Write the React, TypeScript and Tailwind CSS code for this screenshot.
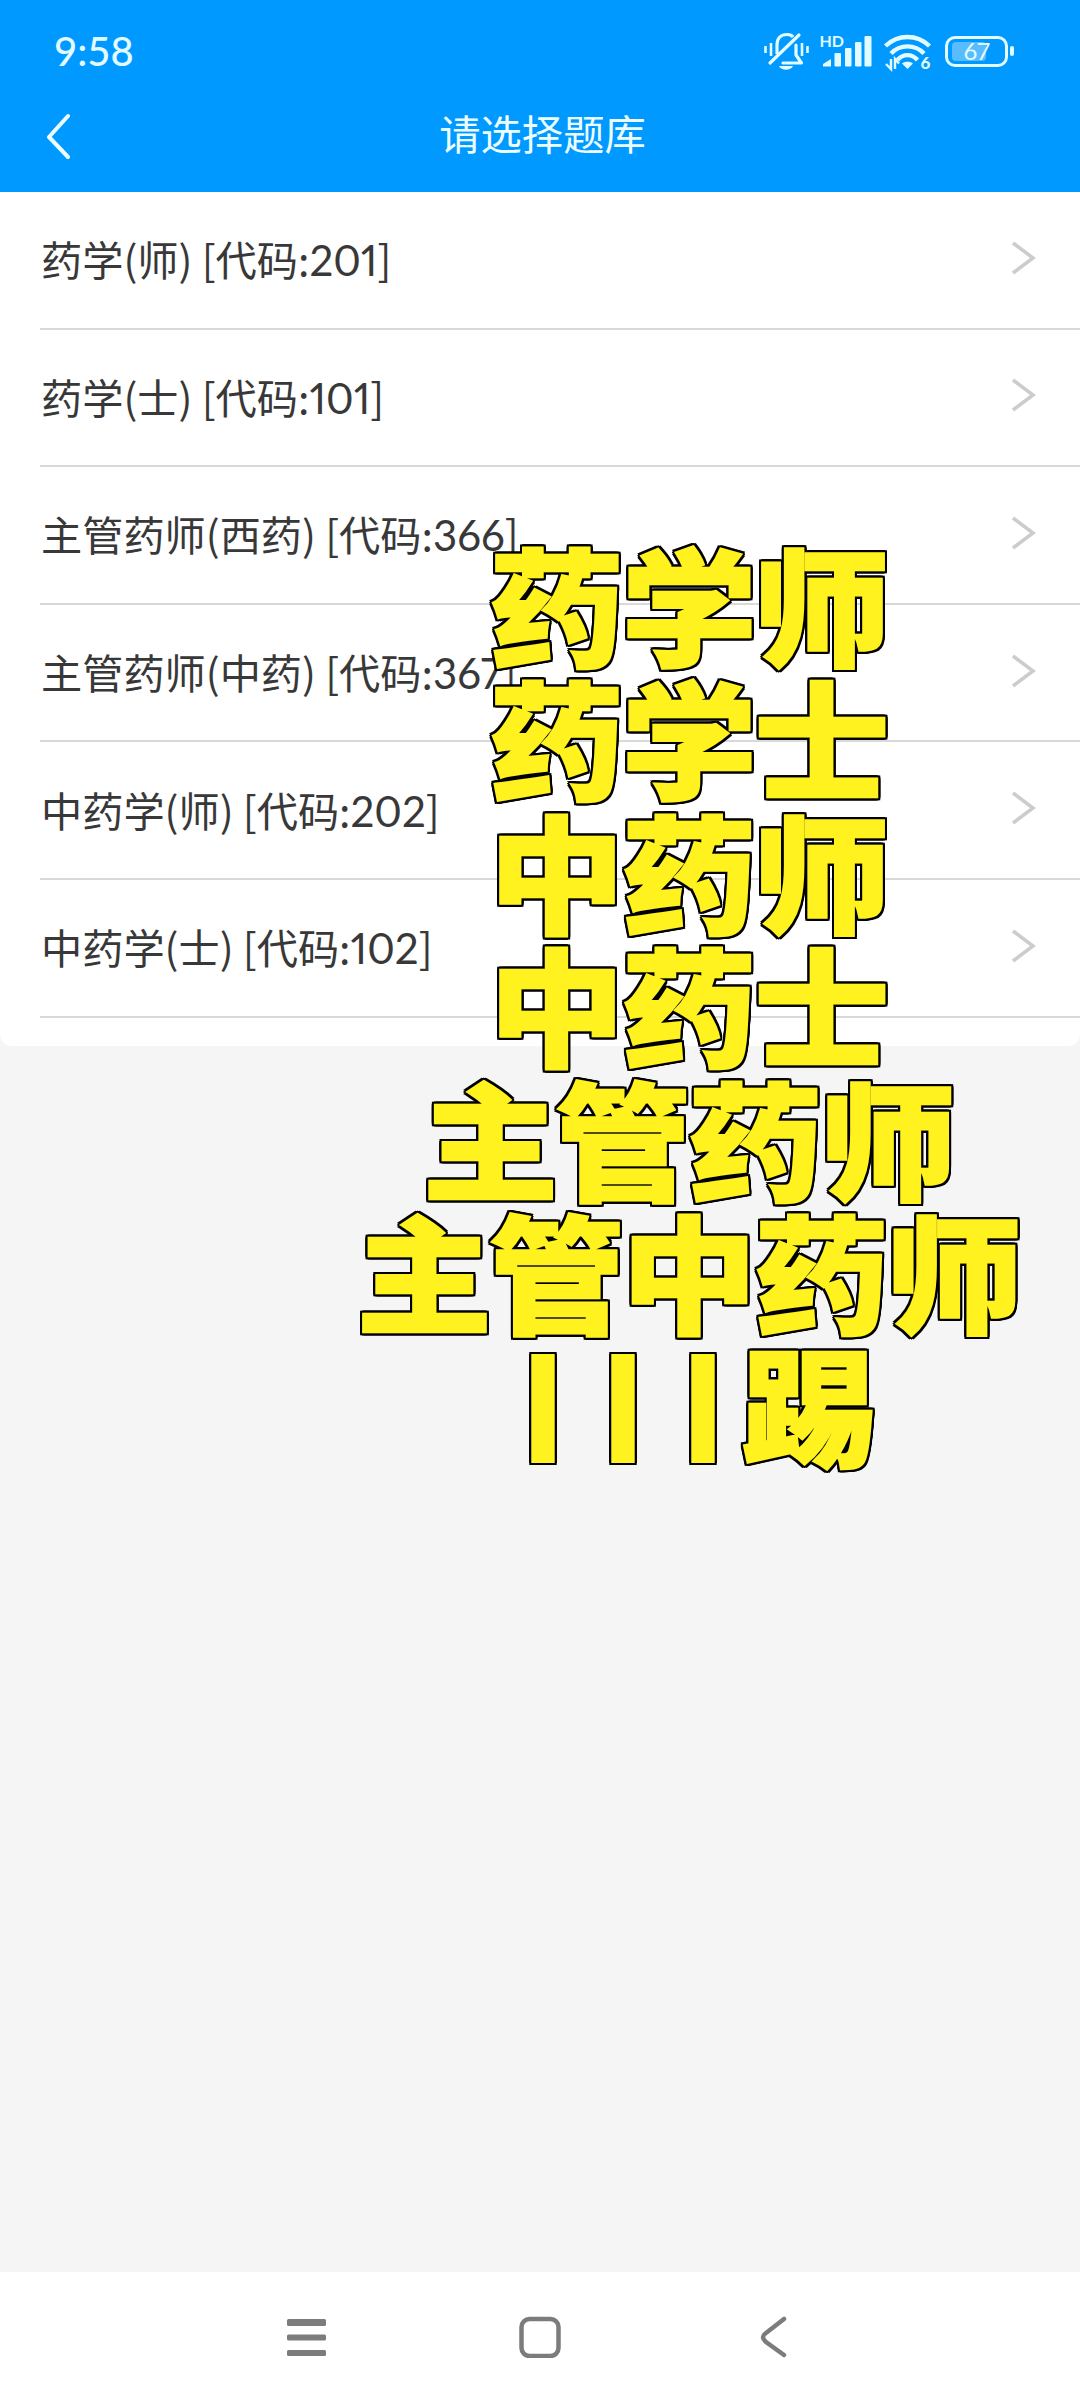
const banks = [
  { name: "药学(师)", code: "201" },
  { name: "药学(士)", code: "101" },
  { name: "主管药师(西药)", code: "366" },
  { name: "主管药师(中药)", code: "367" },
  { name: "中药学(师)", code: "202" },
  { name: "中药学(士)", code: "102" },
];

const captions = ["药学师", "药学士", "中药师", "中药士", "主管药师", "主管中药师"];

function BellOffIcon() {
  return (
    <svg width="46" height="40" viewBox="0 0 46 40" fill="none" stroke="currentColor" strokeWidth="3.200">
      <path d="M13 23V14C13 7 17 3.500 23 3.500C26 3.500 28 4.500 29 6" />
      <path d="M32 14V24L37.500 32H19" strokeLinejoin="round" strokeLinecap="round" />
      <path d="M6 32L35 4" strokeLinecap="round" />
      <path d="M15 35H29C27 40 17 40 15 35Z" fill="currentColor" stroke="none" />
      <path d="M1.500 15V22M7 12V25M38 12V25M43.500 15V22" strokeWidth="2.600" />
    </svg>
  );
}

function SignalIcon() {
  return (
    <svg className="overflow-visible" width="52" height="40" viewBox="0 0 52 40" fill="currentColor">
      <text x="-1.500" y="15.500" fontSize="16" fontWeight="700" fontFamily="Lato, sans-serif">
        HD
      </text>
      <path d="M2 35.500V33L10 28V35.500Z" />
      <rect x="13.500" y="22" width="6.500" height="13.500" rx="1" />
      <rect x="24" y="17" width="6.500" height="18.500" rx="1" />
      <rect x="34" y="11" width="6.500" height="24.500" rx="1" />
      <rect x="43.500" y="5" width="7" height="30.500" rx="1" />
    </svg>
  );
}

function WifiIcon() {
  return (
    <svg className="overflow-visible" width="50" height="40" viewBox="0 0 50 40" fill="none" stroke="currentColor" strokeWidth="4.400">
      <path d="M2.500 15C15 3 34 3 46.500 15" />
      <path d="M8 22.500C17 13 32 13 41 22.500" />
      <path d="M14.500 29C20 22.500 29 22.500 34.500 29" />
      <path d="M24.500 38L19 32.500C21.500 30 27.500 30 30 32.500Z" fill="currentColor" stroke="none" />
      <path d="M8 28V38L3 33M12 38V28L16 32.500" strokeWidth="2.400" />
      <text x="37.500" y="37.500" fontSize="17" fontWeight="900" fontFamily="Lato, sans-serif" fill="currentColor" stroke="none">
        6
      </text>
    </svg>
  );
}

function Battery() {
  return (
    <div className="flex items-center gap-[2px]">
      <div className="relative flex h-[31px] w-[63px] items-center justify-center rounded-[10px] border-3 border-current">
        <div className="absolute left-[4px] top-[3px] h-[19px] w-[34px] rounded-[4px] bg-white/35" />
        <span className="relative font-['Lato'] text-[24px] leading-none tracking-[-1px]">67</span>
      </div>
      <div className="h-[10px] w-1 rounded-sm bg-current" />
    </div>
  );
}

function StatusBar() {
  return (
    <div className="flex h-[102px] items-center justify-between pl-[54px] pr-[66px] text-[#e2fbff]">
      <span className="font-['Lato'] text-[40px] font-medium leading-none">9:58</span>
      <div className="flex items-center">
        <BellOffIcon />
        <div className="ml-[11px] flex">
          <SignalIcon />
        </div>
        <div className="ml-[10px] flex">
          <WifiIcon />
        </div>
        <div className="ml-[12px]">
          <Battery />
        </div>
      </div>
    </div>
  );
}

function Header() {
  return (
    <header className="h-[192px] bg-[#0099ff]">
      <StatusBar />
      <div className="grid h-[66px] grid-cols-[1fr_auto_1fr] items-center text-[#ecfdff]">
        <svg className="ml-[44px]" width="28" height="48" viewBox="0 0 28 48" fill="none" stroke="currentColor" strokeWidth="4" strokeLinecap="round">
          <path d="M24 5L5 26L24 46" strokeLinejoin="round" />
        </svg>
        <h1 className="pb-[5px] pl-[5px] text-[41.300px] leading-none">请选择题库</h1>
      </div>
    </header>
  );
}

function BankRow({ name, code }: { name: string; code: string }) {
  return (
    <li className="ml-[40px] flex h-[137.600px] items-center justify-between border-b-2 border-[#d9d9d9] pl-[1px] pr-[43px]">
      <span className="whitespace-pre text-[41.200px] leading-none text-[#383838]">
        {name} [代码:<span className="font-['Lato'] text-[42px] lining-nums proportional-nums leading-none">{code}</span>]
      </span>
      <svg className="mb-1" width="26" height="36" viewBox="0 0 26 36" fill="none" stroke="#cccccc" strokeWidth="3.500">
        <path d="M2 3L22 18L2 33" />
      </svg>
    </li>
  );
}

function CaptionOverlay() {
  return (
    <div className="absolute left-[338px] top-[535px] flex w-[700px] flex-col items-center text-[135px] font-black leading-[133.400px] tracking-[-2.500px] text-[#fff21f] filter-[drop-shadow(2px_0_0_#000)_drop-shadow(-2px_0_0_#000)_drop-shadow(0_2px_0_#000)_drop-shadow(0_-2px_0_#000)] [-webkit-text-stroke:2.500px_#fff21f] [paint-order:stroke] [stroke-linejoin:round]">
      {captions.map((line) => (
        <div key={line} className="scale-y-[0.94] whitespace-nowrap">
          {line}
        </div>
      ))}
      <div className="flex scale-y-[0.94] items-center whitespace-nowrap">
        <div className="-mt-[10px] flex text-[90px] [-webkit-text-stroke:13px_#fff21f]">
          <span className="w-20 text-center">|</span>
          <span className="w-20 text-center">|</span>
          <span className="w-20 text-center">|</span>
        </div>
        <span>踢</span>
      </div>
    </div>
  );
}

function NavigationBar() {
  return (
    <nav className="flex h-[128px] items-center justify-between bg-white pl-[285px] pr-[288px] text-[#7c7c7c]">
      <svg width="43" height="44" viewBox="0 0 43 44" fill="currentColor">
        <rect x="2" y="5" width="39" height="7" rx="1.500" />
        <rect x="2" y="20.500" width="39" height="6" rx="1.500" />
        <rect x="2" y="36" width="39" height="6" rx="1.500" />
      </svg>
      <svg width="46" height="44" viewBox="0 0 46 44" fill="none" stroke="currentColor" strokeWidth="4.500">
        <rect x="2.500" y="5" width="37" height="37" rx="8" />
      </svg>
      <svg width="36" height="44" viewBox="0 0 36 44" fill="none" stroke="currentColor" strokeWidth="4.500" strokeLinecap="round">
        <path d="M28 5L10 19Q4 23 10 28L28 41" />
      </svg>
    </nav>
  );
}

export default function App() {
  return (
    <div className="relative flex h-[2400px] w-[1080px] flex-col overflow-hidden bg-[#f5f5f5] font-['Noto_Sans_CJK_SC',sans-serif]">
      <Header />
      <main className="flex-1">
        <ul className="rounded-b-xl bg-white pb-[28px]">
          {banks.map((bank) => (
            <BankRow key={bank.code} name={bank.name} code={bank.code} />
          ))}
        </ul>
      </main>
      <NavigationBar />
      <CaptionOverlay />
    </div>
  );
}
